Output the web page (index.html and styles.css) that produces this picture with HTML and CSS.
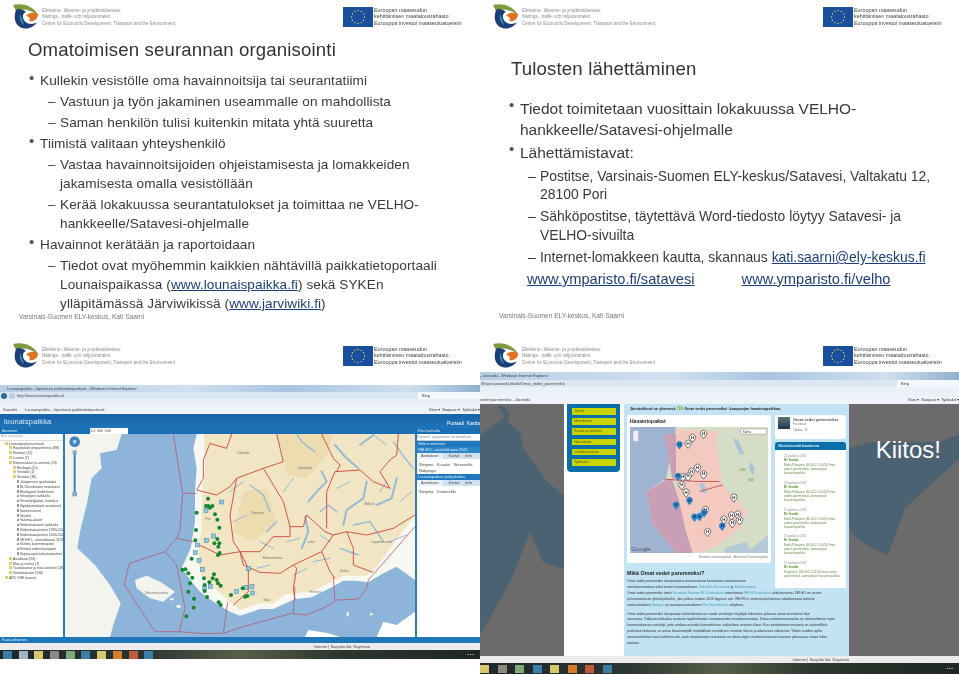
FILE: index.html
```html
<!DOCTYPE html>
<html lang="fi">
<head>
<meta charset="utf-8">
<title>Omatoimisen seurannan organisointi</title>
<link rel="stylesheet" href="styles.css">
</head>
<body>
<svg class="defs" width="0" height="0" aria-hidden="true">
  <defs>
    <symbol id="ely" viewBox="0 0 26 25">
      <path fill="#7f9a3d" d="M0 1C8-1 20 1 25 11 18 6 9 4 3 7Z"/>
      <path fill="#1c3f7c" d="M3 6C0 14 2 23 11 24.500c5 .5 10-2 13-6-6 3-13 1-14-5-.5-3 1-5 3-5.500C10 5 5 4 3 6Z"/>
      <path fill="#e0731d" d="M13 12c3-4 8-4 12-2 0 5-4 8-9 7 2-2 0-5-3-5Z"/>
      <path fill="#2f8fa8" d="M7 10c-1 5 1 9 4 11-1-3-2-7-4-11Z"/>
    </symbol>
    <symbol id="eu" viewBox="0 0 30 20">
      <rect width="30" height="20" fill="#1a4f9f"/>
      <g fill="#e6d94a">
        <circle cx="15" cy="3.5" r=".7"/><circle cx="18.2" cy="4.4" r=".7"/><circle cx="20.6" cy="6.8" r=".7"/>
        <circle cx="21.5" cy="10" r=".7"/><circle cx="20.6" cy="13.2" r=".7"/><circle cx="18.2" cy="15.6" r=".7"/>
        <circle cx="15" cy="16.5" r=".7"/><circle cx="11.8" cy="15.6" r=".7"/><circle cx="9.4" cy="13.2" r=".7"/>
        <circle cx="8.5" cy="10" r=".7"/><circle cx="9.4" cy="6.8" r=".7"/><circle cx="11.8" cy="4.4" r=".7"/>
      </g>
    </symbol>
    <symbol id="pin" viewBox="0 0 24 28" overflow="visible">
      <path fill="#fff" stroke="#333" stroke-width="2" d="M12 27 5 18A9.500 9.500 0 1 1 19 18Z"/>
      <text x="12" y="16" text-anchor="middle" font-size="13" font-weight="700" fill="#222" font-family="Liberation Sans">H</text>
    </symbol>
    <symbol id="pinb" viewBox="0 0 24 28" overflow="visible">
      <path fill="#2d87c6" d="M12 27 5 18A9.500 9.500 0 1 1 19 18Z"/>
      <text x="12" y="16" text-anchor="middle" font-size="13" font-weight="700" fill="#0c3558" font-family="Liberation Sans">H</text>
    </symbol>
  </defs>
</svg>

<main class="deck">

  <section class="slide">
    <header class="head">
      <svg class="logo"><use href="#ely"/></svg>
      <p class="org">Elinkeino-, liikenne- ja ympäristökeskus<br>Närings-, trafik- och miljöcentralen<br>Centre for Economic Development, Transport and the Environment</p>
      <svg class="flag"><use href="#eu"/></svg>
      <p class="eu">Euroopan maaseudun<br>kehittämisen maatalousrahasto:<br>Eurooppa investoi maaseutualueisiin</p>
    </header>
    <div class="body body-a">
      <h1 class="title">Omatoimisen seurannan organisointi</h1>
      <ul class="list">
        <li class="l1"><span>Kullekin vesistölle oma havainnoitsija tai seurantatiimi</span></li>
        <li class="l2"><span>Vastuun ja työn jakaminen useammalle on mahdollista</span></li>
        <li class="l2"><span>Saman henkilön tulisi kuitenkin mitata yhtä suuretta</span></li>
        <li class="l1"><span>Tiimistä valitaan yhteyshenkilö</span></li>
        <li class="l2"><span>Vastaa havainnoitsijoiden ohjeistamisesta ja lomakkeiden<br>jakamisesta omalla vesistöllään</span></li>
        <li class="l2"><span>Kerää lokakuussa seurantatulokset ja toimittaa ne VELHO-<br>hankkeelle/Satavesi-ohjelmalle</span></li>
        <li class="l1"><span>Havainnot kerätään ja raportoidaan</span></li>
        <li class="l2"><span>Tiedot ovat myöhemmin kaikkien nähtävillä paikkatietoportaali<br>Lounaispaikassa (<a href="#">www.lounaispaikka.fi</a>) sekä SYKEn<br>ylläpitämässä Järviwikissä (<a href="#">www.jarviwiki.fi</a>)</span></li>
      </ul>
      <p class="foot">Varsinais-Suomen ELY-keskus, Kati Saarni</p>
    </div>
  </section>

  <section class="slide">
    <header class="head">
      <svg class="logo"><use href="#ely"/></svg>
      <p class="org">Elinkeino-, liikenne- ja ympäristökeskus<br>Närings-, trafik- och miljöcentralen<br>Centre for Economic Development, Transport and the Environment</p>
      <svg class="flag"><use href="#eu"/></svg>
      <p class="eu">Euroopan maaseudun<br>kehittämisen maatalousrahasto:<br>Eurooppa investoi maaseutualueisiin</p>
    </header>
    <div class="body body-b">
      <h1 class="title">Tulosten lähettäminen</h1>
      <ul class="list list-b">
        <li class="l1"><span>Tiedot toimitetaan vuosittain lokakuussa VELHO-<br>hankkeelle/Satavesi-ohjelmalle</span></li>
        <li class="l1"><span>Lähettämistavat:</span></li>
        <li class="l2"><span>Postitse, Varsinais-Suomen ELY-keskus/Satavesi, Valtakatu 12,<br>28100 Pori</span></li>
        <li class="l2"><span>Sähköpostitse, täytettävä Word-tiedosto löytyy Satavesi- ja<br>VELHO-sivuilta</span></li>
        <li class="l2"><span>Internet-lomakkeen kautta, skannaus <a href="#">kati.saarni@ely-keskus.fi</a></span></li>
      </ul>
      <p class="sites"><a href="#">www.ymparisto.fi/satavesi</a><a href="#">www.ymparisto.fi/velho</a></p>
      <p class="foot foot-b">Varsinais-Suomen ELY-keskus, Kati Saarni</p>
    </div>
  </section>

  <section class="slide">
    <header class="head head-lg">
      <svg class="logo"><use href="#ely"/></svg>
      <p class="org">Elinkeino-, liikenne- ja ympäristökeskus<br>Närings-, trafik- och miljöcentralen<br>Centre for Economic Development, Transport and the Environment</p>
      <svg class="flag"><use href="#eu"/></svg>
      <p class="eu">Euroopan maaseudun<br>kehittämisen maatalousrahasto:<br>Eurooppa investoi maaseutualueisiin</p>
    </header>
    <div class="shot shot-c">
      <div class="win-title">Lounaispaikka - läpäisevä paikkatietoportaali - Windows Internet Explorer</div>
      <div class="win-addr"><i class="nav-dot"></i><i class="nav-dot pale"></i><span>http://www.lounaispaikka.fi</span><b class="search">Bing</b></div>
      <div class="win-row"></div>
      <div class="win-tabs"><span class="fav">Suosikit</span><span class="tab">Lounaispaikka - läpäisevä paikkatietoportaali</span><span class="tools">Sivu ▾ &nbsp;Suojaus ▾ &nbsp;Työkalut ▾</span></div>
      <div class="app-head"><span class="brand">lounaispaikka</span><span class="app-nav">Portaali &nbsp;Kartta</span></div>
      <div class="app-bar"><span class="bar-l">Aineistot</span><span class="scale">1:4 000 000</span><span class="bar-r">Etsi karttalta</span></div>
      <div class="app-main">
        <div class="tree">
          <p class="tree-search">Etsi aineistoja</p>
          <p class="t0">Lounaispaikan portaali</p>
          <p class="t1">Rajoitukset ympäristössä (88)</p>
          <p class="t1">Ilmastot (21)</p>
          <p class="t1">Luonto (7)</p>
          <p class="t1">Rakennukset ja asemat (23)</p>
          <p class="t2">Ekologia (10)</p>
          <p class="t2">Vesistöt (1)</p>
          <p class="t2">Vesistöt (36)</p>
          <p class="t3">Jäätymisen ajankohdat</p>
          <p class="t3">ELY-keskusten vesialueet</p>
          <p class="t3">Ekologiset luokitukset</p>
          <p class="t3">Vesistöjen tarkkailu</p>
          <p class="t3">Vesiviljelylaitos, kalastus</p>
          <p class="t3">Hyödynnettävät vesialueet</p>
          <p class="t3">Sameusarvot</p>
          <p class="t3">Vesistö</p>
          <p class="t3">Valuma-alueet</p>
          <p class="t3">Vedenlaatuinen tarkkailu</p>
          <p class="t3">Vedenlaatupisteet 1990-2000</p>
          <p class="t3">Vedenlaatupisteet 2000-2005</p>
          <p class="t3">VELHO - vesistökaava 2011</p>
          <p class="t3">Kiinteä kuormituspiste</p>
          <p class="t3">Kiinteä vedenlaatupiste</p>
          <p class="t3">Vapaa-ajan kalastuspisteet</p>
          <p class="t1">Asiakkaat (24)</p>
          <p class="t1">Maa ja metsä (7)</p>
          <p class="t1">Taustakartat ja muu aineisto (48)</p>
          <p class="t1">Vesistöalueet (136)</p>
          <p class="t0">ARC VSE kaavat</p>
        </div>
        <svg class="gis" viewBox="195 297 1050 609" preserveAspectRatio="none" role="img" aria-label="Kartta Lounais-Suomesta">
          <rect x="195" y="297" width="1050" height="609" fill="#8db4d9"/>
          <path fill="#f4f4ee" d="M195 297H365L350 345 300 355 305 400 275 430 262 500 240 590 232 640 285 690 330 750 362 805 340 870 330 906H195Z"/>
          <path fill="#f8f8f2" d="M590 297 580 340 590 400 585 470 585 560 572 640 545 700 575 740 600 770 640 800 690 830 720 842 780 822 820 822 885 792 935 787 995 757 1030 737 1065 737 1105 742 1150 715 1190 695 1245 735V540 297Z"/>
          <path fill="#f1e5c3" d="M612 297H1245V540L1200 600 1118 712 1095 722 1065 722 1030 722 995 740 935 770 885 775 850 780 820 805 780 805 720 825 690 800 640 755 605 725 595 680 597 620 605 580 605 520 608 470 615 400Z"/>
          <path fill="#ecdcb0" d="M830 297H1000L980 360 920 430 860 420 850 360ZM730 470 800 460 830 560 760 620 700 590Z"/>
          <path fill="#fff" d="M1130 906 1150 860 1190 870 1245 830V906ZM915 906 925 885 985 895 1020 906Z"/>
          <path fill="#f4f4ee" d="M405 735 440 722 480 740 525 770 490 800 450 790 410 760Z"/>
          <path fill="#f8f8f2" d="M530 810h12v8h-12zM510 790h10v6h-10zM1040 830h6v14h-6zM1110 835h8v6h-8z"/>
          <g fill="none" stroke="#93bad8" stroke-linecap="round" stroke-linejoin="round">
            <path stroke-width="6" d="M925 500 950 470 980 440 965 410M1005 330 1040 370 1075 400M1080 330 1120 300M1100 440 1090 490 1040 525 1030 570M1190 430 1175 490 1130 510M915 545 925 590 905 640"/>
            <path stroke-width="4" d="M750 450 790 480 810 530M830 560 800 590M890 297 905 320 945 350M1180 320 1215 370 1240 400M960 530 985 510 1010 530M1060 570 1110 560 1150 620M1020 640 1075 660"/>
            <path stroke-width="3" d="M1170 620 1220 600M740 540 700 560M780 620 820 640M990 620 960 600M1120 300 1160 330M690 470 730 440M880 430 850 470M860 620 900 610M770 700 810 690M880 720 920 700M1140 470 1160 440M1200 500 1235 470M1010 460 1050 440M940 680 990 670"/>
          </g>
          <g fill="none" stroke="#b65a70" stroke-width="2.400" stroke-linejoin="round">
            <path d="M520 297 548 475 540 585 530 610 495 650 388 685 373 750 465 890 538 890 600 895 670 895 720 878 875 835 920 840 990 810 1010 795 1075 792 1100 760 1105 735 1245 575"/>
            <path d="M495 650 530 690 555 820 538 890M530 610 580 620M548 475 590 475M885 755 880 835M1000 725 1005 797M683 800 670 895"/>
          </g>
          <g fill="none" stroke="#cb3f37" stroke-width="2.600" stroke-linejoin="round">
            <path d="M695 297 680 340 630 325 610 375 610 430 590 465 650 480 690 455 710 430 790 400 850 380 830 297"/>
            <path d="M710 430 690 540 700 620 720 650 660 660 620 640 585 625"/>
            <path d="M790 400 850 500 870 575 870 605 820 605 780 650 720 650 730 690 780 712 840 715 880 690 890 700 880 760 885 795"/>
            <path d="M870 575 910 575 920 540 975 590 1000 600 965 650 990 710 1005 730"/>
            <path d="M980 580 980 470 1005 410 1080 405 1120 440 1170 460 1140 410 1170 375 1190 360 1195 297"/>
            <path d="M965 297 1000 370 1020 390 1010 410"/>
            <path d="M1000 600 1040 590 1100 600 1180 580 1245 540"/>
            <path d="M1040 590 1060 640 1060 690 1118 712M880 690 965 650"/>
            <path d="M720 650 745 700 745 770 700 810"/>
          </g>
          <g class="gis-labels">
            <text x="730" y="356">Kokkola</text><text x="915" y="403">Jyväskylä</text><text x="772" y="538">Tampere</text><text x="625" y="556">Pori</text><text x="933" y="623">Lahti</text><text x="818" y="671">Hämeenlinna</text><text x="1033" y="711">Kotka</text><text x="1108" y="509">Mikkeli</text><text x="1145" y="625">Lappeenranta</text><text x="470" y="778">Maarianhamina</text><text x="800" y="798">Salo</text><text x="945" y="774">Helsinki</text>
          </g>
          <g fill="#8ecae0" stroke="#3d7f9b" stroke-width="1.500">
            <rect x="658" y="495" width="12" height="12"/><rect x="612" y="521" width="12" height="12"/><rect x="635" y="597" width="12" height="12"/><rect x="586" y="624" width="12" height="12"/><rect x="613" y="610" width="12" height="12"/><rect x="580" y="647" width="12" height="12"/><rect x="591" y="670" width="12" height="12"/><rect x="601" y="698" width="12" height="12"/><rect x="739" y="695" width="12" height="12"/><rect x="625" y="749" width="12" height="12"/><rect x="608" y="754" width="12" height="12"/><rect x="703" y="764" width="12" height="12"/><rect x="732" y="752" width="12" height="12"/><rect x="750" y="749" width="12" height="12"/><rect x="751" y="768" width="12" height="12"/>
          </g>
          <g fill="#12872f">
            <circle cx="624" cy="491" r="6"/><circle cx="618" cy="513" r="6"/><circle cx="625" cy="513" r="6"/><circle cx="630" cy="518" r="6"/><circle cx="637" cy="513" r="6"/><circle cx="590" cy="533" r="6"/><circle cx="645" cy="538" r="6"/><circle cx="652" cy="554" r="6"/><circle cx="658" cy="578" r="6"/><circle cx="588" cy="585" r="6"/><circle cx="586" cy="616" r="6"/><circle cx="652" cy="612" r="6"/><circle cx="658" cy="625" r="6"/><circle cx="643" cy="625" r="6"/><circle cx="655" cy="635" r="6"/><circle cx="659" cy="654" r="6"/><circle cx="654" cy="660" r="6"/><circle cx="575" cy="671" r="6"/><circle cx="547" cy="704" r="6"/><circle cx="556" cy="703" r="6"/><circle cx="565" cy="715" r="6"/><circle cx="577" cy="728" r="6"/><circle cx="612" cy="730" r="6"/><circle cx="642" cy="718" r="6"/><circle cx="638" cy="730" r="6"/><circle cx="650" cy="735" r="6"/><circle cx="628" cy="742" r="6"/><circle cx="654" cy="745" r="6"/><circle cx="662" cy="752" r="6"/><circle cx="570" cy="745" r="6"/><circle cx="614" cy="750" r="6"/><circle cx="565" cy="770" r="6"/><circle cx="614" cy="768" r="6"/><circle cx="582" cy="791" r="6"/><circle cx="621" cy="786" r="6"/><circle cx="656" cy="802" r="6"/><circle cx="662" cy="810" r="6"/><circle cx="581" cy="818" r="6"/><circle cx="559" cy="844" r="6"/><circle cx="693" cy="780" r="6"/><circle cx="728" cy="760" r="6"/><circle cx="735" cy="785" r="6"/><circle cx="742" cy="783" r="6"/>
          </g>
          <circle cx="224" cy="320" r="16" fill="#3f83bd"/><circle cx="224" cy="320" r="6" fill="#a9cbe6"/>
          <rect x="221" y="350" width="6" height="130" fill="#3f83bd"/><rect x="217" y="470" width="14" height="14" fill="#7eaacb"/><rect x="218" y="346" width="12" height="12" fill="#7eaacb"/>
        </svg>
        <div class="side">
          <p class="side-input">Kunnat, rajapinnat tai osoitteet</p>
          <p class="side-h">Valitut aineistot</p>
          <p class="side-h side-sub">VELHO - vesistökaava 2011</p>
          <p class="side-tabs"><b>Asetukset</b><i>Kartat</i><i>Info</i></p>
          <p class="side-row">Siirtymä &nbsp; Kuvake &nbsp; Värimerkki</p>
          <p class="side-row">Näkyvyys</p>
          <p class="side-h">Lounaispaikan pohjakartta</p>
          <p class="side-tabs"><b>Asetukset</b><i>Kartat</i><i>Info</i></p>
          <p class="side-row">Siirtymä &nbsp; Värimerkki</p>
        </div>
      </div>
      <div class="app-foot">Kuvi-selaimen</div>
      <div class="win-status"><span>Internet | Suojattu tila: Käytössä</span></div>
      <div class="taskbar">
        <i class="tb blue"></i><i class="tb pale"></i><i class="tb yellow"></i><i class="tb grey"></i><i class="tb green"></i><i class="tb blue"></i><i class="tb yellow"></i><i class="tb orange"></i><i class="tb red"></i><i class="tb blue"></i>
        <span class="clock">▪ ▪ ▪</span>
      </div>
    </div>
  </section>

  <section class="slide">
    <header class="head">
      <svg class="logo"><use href="#ely"/></svg>
      <p class="org">Elinkeino-, liikenne- ja ympäristökeskus<br>Närings-, trafik- och miljöcentralen<br>Centre for Economic Development, Transport and the Environment</p>
      <svg class="flag"><use href="#eu"/></svg>
      <p class="eu">Euroopan maaseudun<br>kehittämisen maatalousrahasto:<br>Eurooppa investoi maaseutualueisiin</p>
    </header>
    <div class="shot shot-d">
      <div class="win-title win-title-d">- Järviwiki - Windows Internet Explorer</div>
      <div class="win-addr win-addr-d"><span>/fi/www.jarviwiki.fi/wiki/Omat_vedet_paremmiksi</span><b class="search">Bing</b></div>
      <div class="win-row win-row-d"></div>
      <div class="win-tabs win-tabs-d"><span class="tab tab-d">vedet paremmiksi - Järviwiki</span><span class="tools">Sivu ▾ &nbsp;Suojaus ▾ &nbsp;Työkalut ▾</span></div>
      <div class="wiki">
        <div class="wiki-bg wiki-left">
          <svg class="islands" viewBox="0 0 84 252" preserveAspectRatio="none" aria-hidden="true"><path fill="#4b6272" d="M0 31 13 22 25 13 17 0 26 4 30 11 27 18 40 28 43 44 67 78 84 91V165L63 158 50 128 30 178 0 231Z"/></svg>
        </div>
        <div class="wiki-page">
          <nav class="wiki-nav">
            <a>Järvet</a><a>Merialueet</a><a>Kasvit ja eläimet</a><a>Havainnot</a><a>Osallistuminen</a><a>Työkalut</a>
          </nav>
          <div class="wiki-main">
            <p class="wiki-lead">Järviwikissä on yhteensä <em>39</em> Omat vedet paremmiksi -kampanjan havaintopaikkaa.</p>
            <div class="wiki-side">
              <div class="fb-card"><i class="fb-pic"></i><div><b>Omat vedet paremmiksi</b><small>Facebook</small><small class="like">Tykkää &nbsp;15</small></div></div>
              <h3>Viimeisimmät havainnot</h3>
              <ul class="obs">
                <li><small>21 joulukuu 2011</small><b>Ei levää</b><span>Merli-Pitkajärvi (60.012.1.005)/Omat vedet paremmiksi -kampanjan havaintopaikka</span></li>
                <li><small>20 joulukuu 2011</small><b>Ei levää</b><span>Merli-Pitkajärvi (60.012.1.005)/Omat vedet paremmiksi -kampanjan havaintopaikka</span></li>
                <li><small>17 joulukuu 2011</small><b>Ei levää</b><span>Merli-Pitkajärvi (60.012.1.005)/Omat vedet paremmiksi -kampanjan havaintopaikka</span></li>
                <li><small>15 joulukuu 2011</small><b>Ei levää</b><span>Merli-Pitkajärvi (60.012.1.005)/Omat vedet paremmiksi -kampanjan havaintopaikka</span></li>
                <li><small>15 joulukuu 2011</small><b>Ei levää</b><span>Käyläjärvi (33.002.1.011)/Omat vedet paremmiksi -kampanjan havaintopaikka</span></li>
              </ul>
            </div>
            <div class="map-card">
              <h2>Havaintopaikat</h2>
              <svg class="gmap" viewBox="452 277 413 377" preserveAspectRatio="none" role="img" aria-label="Havaintopaikkojen kartta">
                <rect x="452" y="277" width="413" height="377" fill="#d6ddc6"/>
                <path fill="#9fb4d2" d="M452 277H590L560 430 500 470 520 570 590 654H452Z"/>
                <path fill="#c99fb6" d="M555 298H590L590 430 560 435 500 470 520 570 590 654H640L620 590 600 500 580 440Z"/>
                <path fill="#f3c9c0" d="M590 285 715 290 710 330 730 450 800 530 780 580 700 640 640 654 620 590 600 500 590 440Z"/>
                <path fill="#b4cad8" d="M800 654 865 600V654ZM735 640 800 620 815 654H735Z"/>
                <path fill="#a9c3d9" d="M660 445h14l8 28-14 2zM760 310l18 10 16 40-14-2zM810 380l14 16-2 28-12-18z"/>
                <path fill="#a8c88e" d="M780 400h18v9h-18zM805 430h18v9h-18z"/>
                <path fill="none" stroke="#c4453f" stroke-width="2.500" d="M555 433 650 440 720 440M660 470 730 450"/>
                <use href="#pin" x="627" y="296" width="24" height="28"/><use href="#pin" x="660" y="285" width="24" height="28"/><use href="#pin" x="614" y="314" width="24" height="28"/><use href="#pin" x="642" y="386" width="24" height="28"/><use href="#pin" x="624" y="398" width="24" height="28"/><use href="#pin" x="598" y="414" width="24" height="28"/><use href="#pin" x="614" y="412" width="24" height="28"/><use href="#pin" x="660" y="406" width="24" height="28"/><use href="#pin" x="595" y="438" width="24" height="28"/><use href="#pin" x="608" y="460" width="24" height="28"/><use href="#pin" x="751" y="475" width="24" height="28"/><use href="#pin" x="666" y="512" width="24" height="28"/><use href="#pin" x="721" y="541" width="24" height="28"/><use href="#pin" x="744" y="529" width="24" height="28"/><use href="#pin" x="762" y="526" width="24" height="28"/><use href="#pin" x="768" y="543" width="24" height="28"/><use href="#pin" x="746" y="552" width="24" height="28"/><use href="#pin" x="672" y="578" width="24" height="28"/>
                <use href="#pinb" x="588" y="317" width="24" height="28"/><use href="#pinb" x="584" y="412" width="24" height="28"/><use href="#pinb" x="618" y="484" width="24" height="28"/><use href="#pinb" x="578" y="498" width="24" height="28"/><use href="#pinb" x="633" y="534" width="24" height="28"/><use href="#pinb" x="648" y="532" width="24" height="28"/><use href="#pinb" x="662" y="521" width="24" height="28"/><use href="#pinb" x="716" y="561" width="24" height="28"/>
                <rect x="784" y="283" width="76" height="15" fill="#fff" stroke="#666"/>
                <text class="map-type" x="790" y="294">Kartta</text>
                <rect x="461" y="288" width="16" height="32" fill="#eef" stroke="#999"/>
                <text class="g-logo" x="456" y="648">Google</text>
              </svg>
              <p class="legend">Ilmoitetut havaintopaikat &nbsp; Aktiivisetut havaintopaikat</p>
            </div>
            <div class="wiki-text">
              <h2>Mikä Omat vedet paremmiksi?</h2>
              <p>Omat vedet paremmiksi -kampanjassa kannustetaan kansalaisia omatoimiseen<br>vesistöseurantaan sekä vesien kunnostukseen. <a>Varsinais-Suomessa</a> ja <a>Satakunnassa</a><br>Omat vedet paremmiksi toimii <a>Varsinais-Suomen ELY-keskuksen</a> toteuttaman <a>VELHO-hankkeen</a> aktiivisuutena. VELHO on vesien<br>ja kunnostuksen yhteistyöhanke, joka jatkuu vuoden 2013 loppuun asti. VELHO:n vesiensuojelutoimia rahoittamassa toimivat<br>satakuntalainen <a>Satavesi</a> ja varsinaissuomalainen <a>Pro Saaristomeri</a> -ohjelmat.</p>
              <p>Omat vedet paremmiksi -kampanjan tarkoituksena on saada vesistöjen käyttäjät tekemään jatkuvaa oman vesistönsä tilan<br>seurantaa. Tällaista tarkkailua tarvitaan täydentämään viranomaisten vesistöseurantoja. Tietoa vesistöseurannasta on uittamattoman myös<br>kunnostuksessa vesistöjä, jotta voidaan arvioida kunnostuksen vaikutuksia vesistön tilaan. Kun omatoiminen seuranta on säännöllistä<br>ja tiheästi toistuvaa, se antaa havainnoijalle mahdollisen muutoksen vesistön tilassa ja aikaisessa vaiheessa. Yhden vuoden ajalta<br>seurantatulokset ovat kuitenkin sitä, vaan omatoimisen seurannan on oltava myös vesistöseurannan tasoisen jatkuvaa ja voivat tukea<br>toisiaan.</p>
            </div>
          </div>
        </div>
        <div class="wiki-bg wiki-right">
          <svg class="islands" viewBox="0 0 110 252" preserveAspectRatio="none" aria-hidden="true"><path fill="#4b6272" d="M0 44 23 38 89 38 110 31V55L56 104 39 151 23 144 3 131 0 120Z"/></svg>
        </div>
      </div>
      <div class="win-status win-status-d"><span>Internet | Suojattu tila: Käytössä</span></div>
      <div class="taskbar taskbar-d">
        <i class="tb yellow"></i><i class="tb grey"></i><i class="tb green"></i><i class="tb blue"></i><i class="tb yellow"></i><i class="tb orange"></i><i class="tb red"></i><i class="tb blue"></i>
        <span class="clock">▪ ▪ ▪</span>
      </div>
      <p class="thanks">Kiitos!</p>
    </div>
  </section>
</main>
</body>
</html>
```

FILE: styles.css
```css
html, body { margin: 0; padding: 0; background: #fff; }
body { width: 959px; height: 674px; overflow: hidden; font-family: "Liberation Sans", Arial, sans-serif; color: #3a3a3a; }
p, h1, h2, h3, ul { margin: 0; padding: 0; }
ul { list-style: none; }
.defs { display: block; }

.deck { display: grid; grid-template-columns: 480px 479px; grid-template-rows: 339px 335px; }
.slide { position: relative; display: flex; flex-direction: column; min-width: 0; overflow: hidden; }

/* shared slide header */
.head { display: flex; align-items: flex-start; padding: 4px 0 0 13px; height: 33px; box-sizing: border-box; flex: none; }
.head-lg { height: 46px; }
.logo { width: 26px; height: 25px; flex: none; }
.org { margin-left: 3px; width: 301px; flex: none; padding-top: 4px; font-size: 4.5px; line-height: 6.4px; color: #8a8a8a; filter: blur(.3px); white-space: nowrap; }
.flag { width: 30px; height: 20px; margin-top: 3px; flex: none; }
.eu { margin-left: 1px; padding-top: 3px; font-size: 5.4px; line-height: 6.4px; color: #444; filter: blur(.2px); white-space: nowrap; }

/* text slides */
.body { padding-left: 19px; filter: blur(.3px); flex: 1; display: flex; flex-direction: column; }
.title { font-weight: 400; font-size: 18.6px; line-height: 24px; color: #333; }
.body-a .title { margin: 5px 0 0 9px; letter-spacing: .15px; }
.body-b .title { margin: 24px 0 0 12px; letter-spacing: .15px; }
.list { font-size: 13.6px; line-height: 19px; margin-top: 7.500px; letter-spacing: .08px; }
.list li { display: flex; margin-top: 1.900px; white-space: nowrap; }
.list .l1::before { content: "•"; width: 11px; margin-left: 10px; color: #555; flex: none; line-height: 14px; font-size: 15px; }
.list .l2::before { content: "–"; width: 12px; margin-left: 29px; flex: none; }
.list a, .sites a { color: #1d3f78; text-decoration: underline; }
.foot { margin-top: auto; padding-bottom: 19px; font-size: 6.6px; line-height: 8px; color: #777; }
.list-b { margin-top: 14px; letter-spacing: 0; }
.list-b li { margin-top: 3.300px; }
.list-b .l1 { font-size: 15.5px; line-height: 21px; }
.list-b .l1 + .l1 { margin-top: 2px; }
.list-b .l2 { font-size: 13.9px; line-height: 18.700px; }
.list-b .l1 + .l2 { margin-top: 3.400px; }
.sites { font-size: 14.6px; line-height: 19px; margin: 3px 0 0 28px; display: flex; gap: 47px; }
.sites a { letter-spacing: .02px; }

/* screenshots */
.shot { position: relative; display: flex; flex-direction: column; font-size: 4px; color: #444; flex: 1; min-height: 0; }
.shot > *, .wiki { filter: blur(.35px); }
.win-title { height: 7px; line-height: 7px; padding-left: 7px; background: linear-gradient(90deg, #b7cfe6, #cfe0f0 40%, #a9c4e0 60%, #cfe0ef 85%, #8fb0cf); white-space: nowrap; overflow: hidden; }
.win-addr { height: 7px; line-height: 7px; background: #dbe7f3; display: flex; align-items: center; gap: 2px; padding-left: 1px; }
.nav-dot { width: 6px; height: 6px; border-radius: 50%; background: #2f6b9e; }
.nav-dot.pale { background: #b9cde0; }
.search { margin-left: auto; width: 62px; background: #f4f7fb; font-weight: 400; padding-left: 4px; box-sizing: border-box; }
.win-row { height: 7px; background: #e8eff7; }
.win-tabs { height: 8px; line-height: 8px; background: #eff3f9; display: flex; padding-left: 3px; gap: 8px; white-space: nowrap; overflow: hidden; }
.tools { margin-left: auto; color: #333; }
.app-head { height: 14px; background: linear-gradient(#1a62a8, #1f75b9); display: flex; align-items: center; justify-content: space-between; padding: 0 0 0 4px; white-space: nowrap; }
.brand { font-size: 7.4px; color: #dff0fb; letter-spacing: .2px; }
.app-nav { font-size: 5px; color: #fff; padding-top: 3px; }
.app-bar { height: 6px; line-height: 6px; background: #1a6fb5; color: #d8ebf8; display: flex; white-space: nowrap; }
.bar-l { width: 90px; padding-left: 2px; box-sizing: border-box; flex: none; }
.scale { background: #fff; color: #555; width: 38px; flex: none; }
.bar-r { margin-left: auto; width: 62px; flex: none; }
.app-main { height: 203px; display: flex; background: #fff; }
.tree { width: 63px; flex: none; border-right: 2px solid #2c7cb8; overflow: hidden; white-space: nowrap; font-size: 3.500px; line-height: 4.800px; }
.tree-search { color: #999; padding: 1px 0 1px 1px; border-bottom: 1px solid #ddd; margin-bottom: 1px; line-height: 3.600px; }
.t0 { padding-left: 5px; }
.t1 { padding-left: 9px; }
.t2 { padding-left: 13px; }
.t3 { padding-left: 17px; }
.t0::before, .t1::before, .t2::before { content: ""; display: inline-block; width: 3px; height: 3px; margin-right: 1px; background: #e3cf6c; }
.t3::before { content: ""; display: inline-block; width: 2px; height: 2.500px; margin-right: 1px; border: .5px solid #999; background: #fff; box-sizing: border-box; }
.gis { width: 350px; height: 203px; flex: none; display: block; }
.gis-labels text { font-size: 10px; fill: #777; font-family: "Liberation Sans", sans-serif; text-anchor: middle; }
.side { flex: 1; border-left: 2px solid #2c7cb8; white-space: nowrap; overflow: hidden; }
.side p { line-height: 6px; height: 6px; }
.side-input { color: #888; border-bottom: 1px solid #ccc; }
.side-h { background: #1f78bd; color: #e5f2fb; padding-left: 1px; }
.side-sub { background: #2b86c9; }
.side-tabs { background: #cfe2f2; display: flex; gap: 6px; margin-bottom: 3px; }
.side-tabs b { background: #eaf2f9; padding: 0 4px; font-weight: 400; }
.side-row { padding-left: 2px; }
.app-foot { height: 6px; line-height: 6px; background: #1c76b8; color: #dcecf8; padding-left: 2px; }
.win-status { height: 7px; line-height: 7px; background: #ececec; text-align: right; padding-right: 110px; }
.taskbar { height: 9px; background: linear-gradient(90deg, #20272b, #2a3430 30%, #55604a 50%, #2c372e 70%, #1e2722); display: flex; align-items: center; gap: 6.700px; padding-left: 3px; }
.taskbar-d { height: 11px; gap: 8.500px; padding-left: 0; }
.tb { width: 9px; height: 8px; flex: none; }
.tb.blue { background: #3a7fa8; }
.tb.pale { background: #9fb4c4; }
.tb.yellow { background: #d8c66a; }
.tb.grey { background: #8c8a7c; }
.tb.green { background: #7fa978; }
.tb.orange { background: #d77a2a; }
.tb.red { background: #c2583c; }
.clock { margin-left: auto; color: #ddd; padding-right: 6px; }

/* fourth slide */
.win-title-d { height: 8px; line-height: 8px; padding-left: 0; }
.win-addr-d { height: 7px; line-height: 7px; }
.win-row-d { height: 9px; background: #eaf1f8; }
.win-tabs-d { height: 8px; line-height: 8px; padding-left: 0; }
.wiki { display: flex; height: 252px; flex: none; background: #6b6b6b; }
.wiki-bg { flex: none; background: #6b6b6b; overflow: hidden; }
.wiki-left { width: 84px; }
.wiki-right { flex: 1; }
.islands { display: block; width: 100%; height: 100%; }
.wiki-page { width: 285px; flex: none; display: flex; background: #fff; overflow: hidden; }
.wiki-nav { flex: none; box-sizing: border-box; height: 68px; padding: 4px 4px 0 5px; margin: 0 0 0 3px; background: #0a6fa8; border-radius: 0 0 4px 4px; display: flex; flex-direction: column; gap: 3.600px; width: 53px; }
.wiki-nav a { display: block; height: 6.600px; line-height: 6.600px; padding-left: 2px; background: #ccd400; color: #4b5a10; font-size: 3.800px; white-space: nowrap; overflow: hidden; }
.wiki-main { margin-left: 4px; flex: 1; background: #c2e3f4; padding: 0 3px; overflow: hidden; min-width: 0; color: #333; font-size: 3.800px; }
.wiki-lead { font-weight: 700; height: 11px; line-height: 9px; white-space: nowrap; padding-left: 3px; color: #222; }
.wiki-lead em { font-style: normal; color: #7fb23a; font-size: 6px; }
.map-card { float: left; width: 144px; box-sizing: border-box; height: 148px; background: #fff; border-radius: 2px; padding: 0 3px; }
.map-card h2, .wiki-text h2 { font-size: 5px; font-weight: 700; color: #222; }
.map-card h2 { line-height: 12px; }
.gmap { display: block; width: 138px; height: 126px; }
.map-type { font-size: 9px; fill: #333; font-family: "Liberation Sans", sans-serif; }
.g-logo { font-size: 18px; fill: #555; font-family: "Liberation Sans", sans-serif; }
.legend { line-height: 9px; text-align: right; color: #777; font-size: 3px; white-space: nowrap; }
.wiki-side { float: right; width: 71px; white-space: normal; }
.fb-card { height: 24px; background: #fff; border-radius: 2px; display: flex; gap: 3px; padding: 2px 3px; box-sizing: border-box; font-size: 3.600px; }
.fb-card b { display: block; font-size: 4px; color: #555; }
.fb-card small { display: block; font-size: 3px; color: #777; }
.fb-card .like { margin-top: 2px; }
.fb-pic { width: 12px; height: 12px; background: linear-gradient(#5f7684, #22384a); flex: none; }
.wiki-side h3 { margin-top: 3px; height: 8px; line-height: 8px; background: #0a6fa8; color: #dff0fa; font-size: 3.600px; padding-left: 3px; border-radius: 3px 3px 0 0; font-weight: 700; }
.obs { background: #fff; height: 138px; padding: 4px 3px 0 9px; box-sizing: border-box; overflow: hidden; }
.obs li { height: 26.800px; line-height: 4px; font-size: 3.200px; color: #6a8a4a; overflow: hidden; }
.obs small { display: block; color: #888; font-size: 3px; }
.obs b { display: block; font-weight: 700; color: #5d8f2c; font-size: 3.800px; line-height: 5px; }
.wiki-text { clear: left; padding-top: 6px; color: #333; white-space: nowrap; }
.wiki-text h2 { font-size: 5.400px; line-height: 8px; margin-bottom: 2px; }
.wiki-text p { font-size: 3.400px; line-height: 5.900px; margin-bottom: 3px; }
.wiki-text a { color: #3f9ea8; }

.shot > .thanks { position: absolute; right: 18px; top: 64px; font-size: 24px; line-height: 28px; color: #fff; filter: none; }
```
